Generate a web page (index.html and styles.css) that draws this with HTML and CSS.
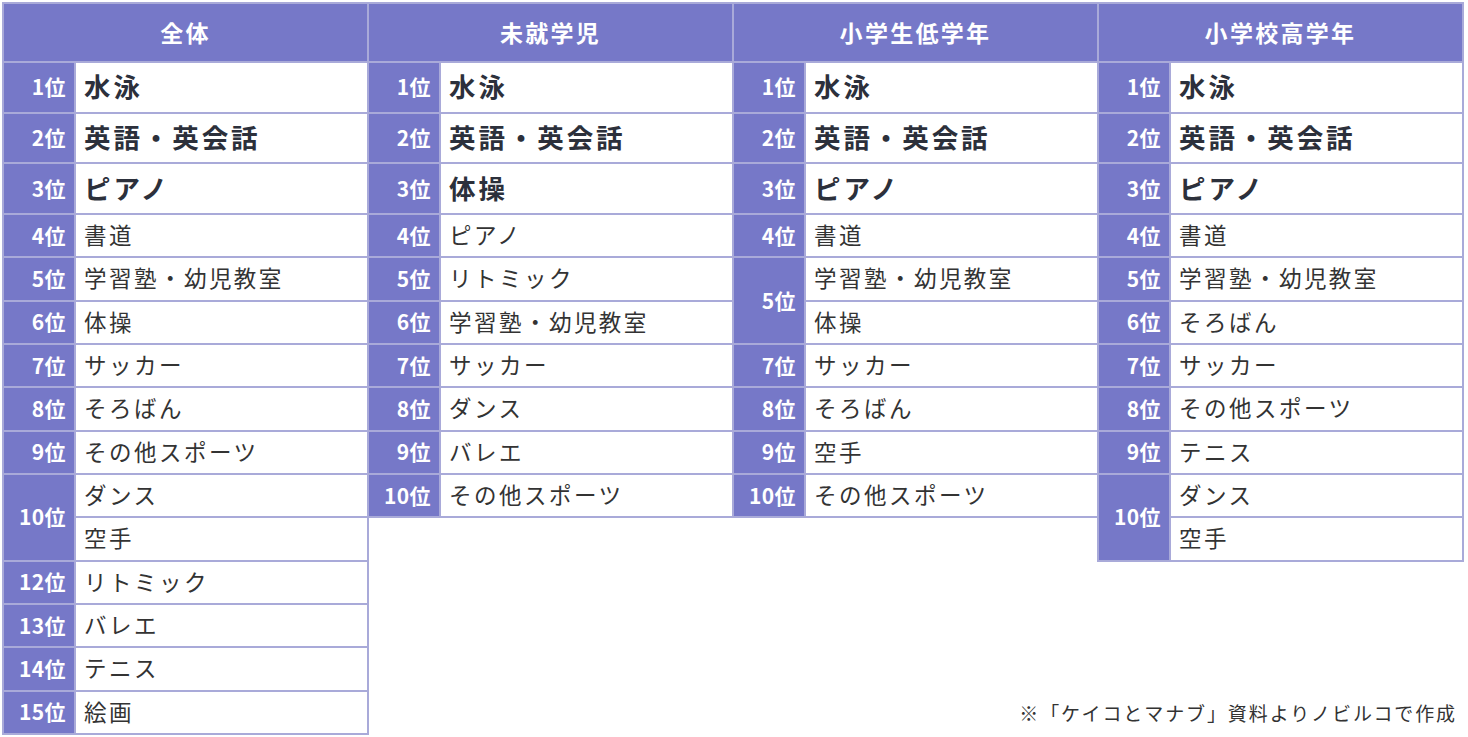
FILE: index.html
```html
<!DOCTYPE html>
<html lang="ja">
<head>
<meta charset="utf-8">
<title>習い事ランキング</title>
<link rel="stylesheet" href="styles.css">
</head>
<body>
<div class="board">
  <div class="rank-table col1">
    <div class="head">全体</div>
    <div class="rank">1位</div><div class="item top">水泳</div>
    <div class="rank">2位</div><div class="item top">英語・英会話</div>
    <div class="rank">3位</div><div class="item top">ピアノ</div>
    <div class="rank">4位</div><div class="item">書道</div>
    <div class="rank">5位</div><div class="item">学習塾・幼児教室</div>
    <div class="rank">6位</div><div class="item">体操</div>
    <div class="rank">7位</div><div class="item">サッカー</div>
    <div class="rank">8位</div><div class="item">そろばん</div>
    <div class="rank">9位</div><div class="item">その他スポーツ</div>
    <div class="rank span2">10位</div><div class="item">ダンス</div><div class="item">空手</div>
    <div class="rank">12位</div><div class="item">リトミック</div>
    <div class="rank">13位</div><div class="item">バレエ</div>
    <div class="rank">14位</div><div class="item">テニス</div>
    <div class="rank">15位</div><div class="item">絵画</div>
  </div>
  <div class="rank-table col2">
    <div class="head">未就学児</div>
    <div class="rank">1位</div><div class="item top">水泳</div>
    <div class="rank">2位</div><div class="item top">英語・英会話</div>
    <div class="rank">3位</div><div class="item top">体操</div>
    <div class="rank">4位</div><div class="item">ピアノ</div>
    <div class="rank">5位</div><div class="item">リトミック</div>
    <div class="rank">6位</div><div class="item">学習塾・幼児教室</div>
    <div class="rank">7位</div><div class="item">サッカー</div>
    <div class="rank">8位</div><div class="item">ダンス</div>
    <div class="rank">9位</div><div class="item">バレエ</div>
    <div class="rank">10位</div><div class="item">その他スポーツ</div>
  </div>
  <div class="rank-table col3">
    <div class="head">小学生低学年</div>
    <div class="rank">1位</div><div class="item top">水泳</div>
    <div class="rank">2位</div><div class="item top">英語・英会話</div>
    <div class="rank">3位</div><div class="item top">ピアノ</div>
    <div class="rank">4位</div><div class="item">書道</div>
    <div class="rank span2">5位</div><div class="item">学習塾・幼児教室</div><div class="item">体操</div>
    <div class="rank">7位</div><div class="item">サッカー</div>
    <div class="rank">8位</div><div class="item">そろばん</div>
    <div class="rank">9位</div><div class="item">空手</div>
    <div class="rank">10位</div><div class="item">その他スポーツ</div>
  </div>
  <div class="rank-table col4">
    <div class="head">小学校高学年</div>
    <div class="rank">1位</div><div class="item top">水泳</div>
    <div class="rank">2位</div><div class="item top">英語・英会話</div>
    <div class="rank">3位</div><div class="item top">ピアノ</div>
    <div class="rank">4位</div><div class="item">書道</div>
    <div class="rank">5位</div><div class="item">学習塾・幼児教室</div>
    <div class="rank">6位</div><div class="item">そろばん</div>
    <div class="rank">7位</div><div class="item">サッカー</div>
    <div class="rank">8位</div><div class="item">その他スポーツ</div>
    <div class="rank">9位</div><div class="item">テニス</div>
    <div class="rank span2">10位</div><div class="item">ダンス</div><div class="item">空手</div>
  </div>
  <p class="note">※「ケイコとマナブ」資料よりノビルコで作成</p>
</div>
</body>
</html>
```
FILE: styles.css
```css
html, body {
  margin: 0;
  padding: 0;
  background: #ffffff;
}
body {
  padding: 2px 0 0 2px;
  font-family: "Noto Sans CJK JP", "Noto Sans", sans-serif;
  color: #333333;
}
.board {
  display: grid;
  grid-template-columns: repeat(4, 365px);
  grid-template-rows: auto;
  align-items: start;
}
.rank-table {
  grid-row: 1;
  width: 367px;
  box-sizing: border-box;
  display: grid;
  grid-template-columns: 70px 1fr;
  grid-template-rows: 57px repeat(3, 48.67px);
  grid-auto-rows: 41.33px;
  gap: 2px;
  padding: 2px;
  background: #a9aad9;
}
.col1 { grid-column: 1; }
.col2 { grid-column: 2; }
.col3 { grid-column: 3; }
.col4 { grid-column: 4; }
.head {
  grid-column: 1 / 3;
  background: #7678c8;
  color: #ffffff;
  font-weight: 700;
  font-size: 23px;
  letter-spacing: 0.1em;
  display: flex;
  align-items: center;
  justify-content: center;
  padding-bottom: 2px;
}
.rank {
  background: #7678c8;
  color: #ffffff;
  font-weight: 700;
  font-size: 21px;
  letter-spacing: 0.02em;
  display: flex;
  align-items: center;
  justify-content: flex-end;
  padding-right: 8px;
  padding-bottom: 2px;
}
.rank.span2 {
  grid-row: span 2;
}
.item {
  background: #ffffff;
  font-size: 22.5px;
  letter-spacing: 0.11em;
  display: flex;
  align-items: center;
  padding-left: 8px;
  padding-bottom: 3px;
  white-space: nowrap;
}
.item.top {
  font-weight: 700;
  font-size: 26.5px;
  color: #2c303b;
}
.note {
  grid-row: 1;
  grid-column: 2 / 5;
  align-self: end;
  justify-self: end;
  margin: 0 5px 8px 0;
  font-size: 19px;
  line-height: 1.4;
  letter-spacing: 0.1em;
  color: #333333;
}
```
